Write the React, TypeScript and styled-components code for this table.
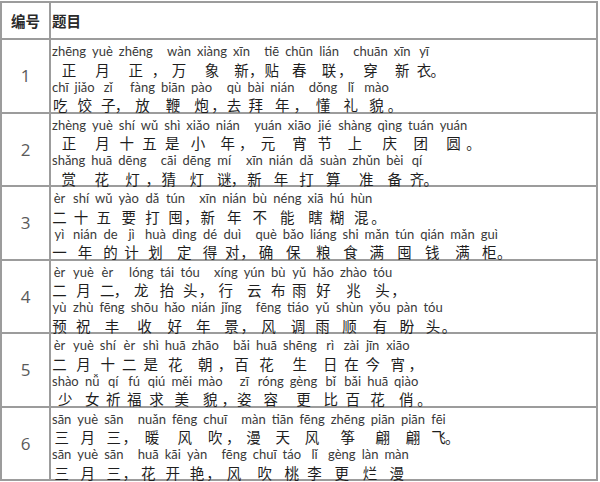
import styled, { createGlobalStyle } from "styled-components";

const GlobalStyle = createGlobalStyle`
  html, body {
    margin: 0;
    padding: 0;
    background: #ffffff;
  }
  body {
    font-family: "Noto Sans CJK SC", "Noto Sans", sans-serif;
  }
`;

const Table = styled.table`
  margin-top: 1px;
  width: 598px;
  border-collapse: collapse;
  table-layout: fixed;
  color: #222;
`;

const HeadRow = styled.tr`
  height: 37px;
`;

const BodyRow = styled.tr`
  height: 73.5px;
`;

const HeadCell = styled.th<{ $center?: boolean }>`
  border: 2px solid #9c9c9c;
  padding: 0 0 0 ${({ $center }) => ($center ? "0" : "1px")};
  text-align: ${({ $center }) => ($center ? "center" : "left")};
  font-family: "Noto Sans CJK SC", sans-serif;
  font-size: 14.5px;
  font-weight: 700;
  color: #2a2a2a;
  vertical-align: middle;
`;

const NumCell = styled.td`
  border: 2px solid #9c9c9c;
  text-align: center;
  vertical-align: middle;
  font-family: "Open Sans", "Liberation Sans", sans-serif;
  font-weight: 400;
  font-size: 17px;
  color: #5a5a5a;
  padding: 0;
`;

const VerseCell = styled.td`
  border: 2px solid #9c9c9c;
  vertical-align: top;
  padding: 4px 0 0 1px;
`;

const Verses = styled.div`
  display: flex;
  flex-direction: column;
  margin-bottom: -5px;
`;

const Verse = styled.div`
  display: flex;
  gap: 6px;
  white-space: nowrap;
`;

const Unit = styled.span<{ $punct?: boolean }>`
  display: inline-flex;
  flex-direction: column;
  align-items: ${({ $punct }) => ($punct ? "flex-start" : "center")};
  min-width: ${({ $punct }) => ($punct ? "0" : "15px")};
  margin: ${({ $punct }) => ($punct ? "0 2px 0 -7px" : "0")};
  font-feature-settings: ${({ $punct }) => ($punct ? '"halt"' : "normal")};
`;

const Py = styled.span`
  font-family: Lato, "Open Sans", sans-serif;
  font-size: 13px;
  line-height: 15.6px;
  height: 15.6px;
  color: #3a3a3a;
`;

const Hz = styled.span`
  font-family: "Noto Sans CJK SC", sans-serif;
  font-size: 14.5px;
  line-height: 21px;
  height: 21px;
  margin-top: -1px;
  color: #1e1e1e;
`;

type Line = { py: string; hz: string };

const poems: Line[][] = [
  [
    { py: "zhēng yuè zhēng wàn xiàng xīn tiē chūn lián chuān xīn yī", hz: "正月正，万象新，贴春联，穿新衣。" },
    { py: "chī jiǎo zǐ fàng biān pào qù bài nián dǒng lǐ mào", hz: "吃饺子，放鞭炮，去拜年，懂礼貌。" },
  ],
  [
    { py: "zhèng yuè shí wǔ shì xiǎo nián yuán xiāo jié shàng qìng tuán yuán", hz: "正月十五是小年，元宵节上庆团圆。" },
    { py: "shǎng huā dēng cāi dēng mí xīn nián dǎ suàn zhǔn bèi qí", hz: "赏花灯，猜灯谜，新年打算准备齐。" },
  ],
  [
    { py: "èr shí wǔ yào dǎ tún xīn nián bù néng xiā hú hùn", hz: "二十五要打囤，新年不能瞎糊混。" },
    { py: "yì nián de jì huà dìng dé duì què bǎo liáng shi mǎn tún qián mǎn guì", hz: "一年的计划定得对，确保粮食满囤钱满柜。" },
  ],
  [
    { py: "èr yuè èr lóng tái tóu xíng yún bù yǔ hǎo zhào tóu", hz: "二月二，龙抬头，行云布雨好兆头，" },
    { py: "yù zhù fēng shōu hǎo nián jǐng fēng tiáo yǔ shùn yǒu pàn tóu", hz: "预祝丰收好年景，风调雨顺有盼头。" },
  ],
  [
    { py: "èr yuè shí èr shì huā zhāo bǎi huā shēng rì zài jīn xiāo", hz: "二月十二是花朝，百花生日在今宵，" },
    { py: "shào nǚ qí fú qiú měi mào zī róng gèng bǐ bǎi huā qiào", hz: "少女祈福求美貌，姿容更比百花俏。" },
  ],
  [
    { py: "sān yuè sān nuǎn fēng chuī màn tiān fēng zhēng piān piān fēi", hz: "三月三，暖风吹，漫天风筝翩翩飞。" },
    { py: "sān yuè sān huā kāi yàn fēng chuī táo lǐ gèng làn màn", hz: "三月三，花开艳，风吹桃李更烂漫" },
  ],
];

const PUNCT = "，。、";

const toUnits = (line: Line) => {
  const syllables = line.py.split(/\s+/);
  let i = 0;
  return Array.from(line.hz).map((ch) =>
    PUNCT.includes(ch)
      ? { py: "", hz: ch, punct: true }
      : { py: syllables[i++] ?? "", hz: ch, punct: false }
  );
};

const App = () => {
  return (
    <>
      <GlobalStyle />
      <Table lang="zh-CN">
        <colgroup>
          <col style={{ width: 49 }} />
          <col />
        </colgroup>
        <thead>
          <HeadRow>
            <HeadCell $center>编号</HeadCell>
            <HeadCell>题目</HeadCell>
          </HeadRow>
        </thead>
        <tbody>
          {poems.map((lines, idx) => (
            <BodyRow key={idx}>
              <NumCell>{idx + 1}</NumCell>
              <VerseCell>
                <Verses>
                  {lines.map((line, j) => (
                    <Verse key={j}>
                      {toUnits(line).map((u, k) => (
                        <Unit key={k} $punct={u.punct}>
                          <Py>{u.py}</Py>
                          <Hz>{u.hz}</Hz>
                        </Unit>
                      ))}
                    </Verse>
                  ))}
                </Verses>
              </VerseCell>
            </BodyRow>
          ))}
        </tbody>
      </Table>
    </>
  );
};

export default App;
